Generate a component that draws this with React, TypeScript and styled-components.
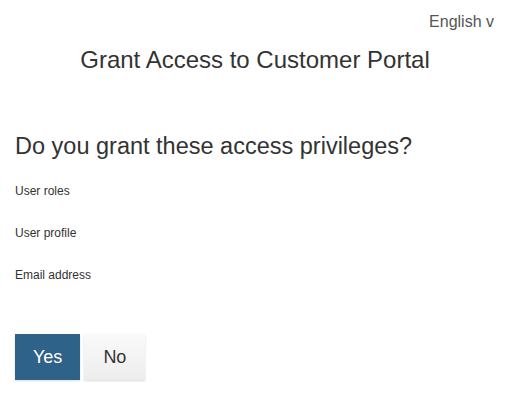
import React from "react";
import styled, { createGlobalStyle } from "styled-components";

const GlobalStyle = createGlobalStyle`
  html, body {
    margin: 0;
    padding: 0;
    background: #fff;
    font-family: "Liberation Sans", Arial, sans-serif;
    color: #333;
  }
`;

const Page = styled.div`
  width: 510px;
  height: 406px;
  display: flex;
  flex-direction: column;
  box-sizing: border-box;
`;

const TopBar = styled.div`
  display: flex;
  justify-content: flex-end;
  padding: 12px 16px 0 0;
  height: 22px;
`;

const LangLink = styled.span`
  font-size: 16px;
  color: #555;
  line-height: 20px;
`;

const Title = styled.h1`
  margin: 11px 0 0;
  font-size: 24px;
  font-weight: normal;
  text-align: center;
  line-height: 30px;
  color: #333;
`;

const Content = styled.div`
  padding: 0 15px;
  display: flex;
  flex-direction: column;
`;

const Question = styled.h3`
  margin: 56px 0 0;
  font-size: 23.5px;
  font-weight: normal;
  line-height: 30px;
  color: #333;
`;

const List = styled.ul`
  list-style: none;
  margin: 23px 0 0;
  padding: 0;
  display: flex;
  flex-direction: column;
  gap: 28px;
`;

const Item = styled.li`
  font-size: 12px;
  line-height: 14px;
  color: #333;
`;

const Buttons = styled.div`
  display: flex;
  gap: 4px;
  margin-top: 52px;
`;

const Btn = styled.button<{ $primary?: boolean }>`
  height: 46px;
  padding: 0 ${(p) => (p.$primary ? "18px" : "19px")};
  font-family: "Liberation Sans", Arial, sans-serif;
  font-size: 18px;
  border: none;
  border-radius: 0;
  cursor: pointer;
  color: ${(p) => (p.$primary ? "#fff" : "#333")};
  background: ${(p) =>
    p.$primary ? "#2f6288" : "linear-gradient(#fafafa, #ededed)"};
  box-shadow: 0 1px 2px rgba(0, 0, 0, 0.15);
`;

export default function App() {
  return (
    <>
      <GlobalStyle />
      <Page>
        <TopBar>
          <LangLink>English v</LangLink>
        </TopBar>
        <Title>Grant Access to Customer Portal</Title>
        <Content>
          <Question>Do you grant these access privileges?</Question>
          <List>
            <Item>User roles</Item>
            <Item>User profile</Item>
            <Item>Email address</Item>
          </List>
          <Buttons>
            <Btn $primary>Yes</Btn>
            <Btn>No</Btn>
          </Buttons>
        </Content>
      </Page>
    </>
  );
}
